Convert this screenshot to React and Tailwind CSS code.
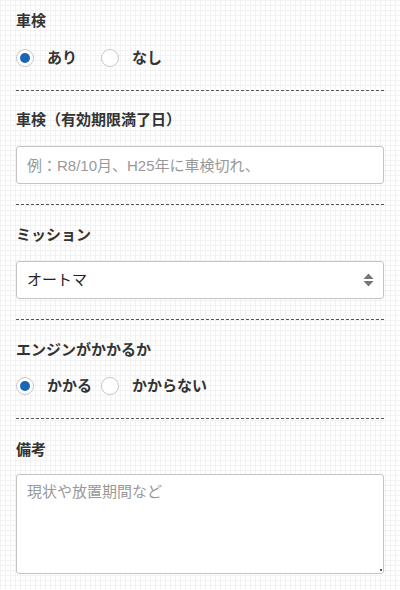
import React, { useState } from 'react';

const font = { fontFamily: '"Liberation Sans", "Noto Sans CJK JP", sans-serif' };

function Dashed() {
  return <div className="h-px w-full bg-[linear-gradient(to_right,#555_3px,transparent_3px)] bg-[length:5px_1px] bg-repeat-x" />;
}

function Radio({ checked, label, onClick, wide }) {
  return (
    <label onClick={onClick} className={`flex items-center h-[22px] cursor-pointer ${wide ? 'w-[85px]' : ''}`}>
      <span className="w-[18px] h-[18px] rounded-full border border-[#c8c8c8] bg-white flex items-center justify-center shrink-0">
        {checked && <span className="w-[10px] h-[10px] rounded-full bg-[#1766b8]" />}
      </span>
      <span className="ml-[13px] text-[15px] font-bold text-[#333] leading-[22px]">{label}</span>
    </label>
  );
}

function Label({ children }) {
  return <div className="text-[15px] font-bold text-[#333] leading-[22px]">{children}</div>;
}

export default function App() {
  const [shaken, setShaken] = useState('あり');
  const [engine, setEngine] = useState('かかる');

  return (
    <div
      style={font}
      className="min-h-[590px] w-[400px] px-4 bg-white bg-[linear-gradient(#f2f2f2_1px,transparent_1px),linear-gradient(90deg,#f2f2f2_1px,transparent_1px)] bg-[length:5px_5px]"
    >
      {/* 車検 */}
      <div className="pt-[10px] pb-[21px]">
        <Label>車検</Label>
        <div className="flex mt-[15px]">
          <Radio wide checked={shaken === 'あり'} label="あり" onClick={() => setShaken('あり')} />
          <Radio checked={shaken === 'なし'} label="なし" onClick={() => setShaken('なし')} />
        </div>
      </div>
      <Dashed />

      {/* 有効期限 */}
      <div className="pt-[18px] pb-[20px]">
        <Label>車検（有効期限満了日）</Label>
        <input
          type="text"
          placeholder="例：R8/10月、H25年に車検切れ、"
          className="mt-[15px] block w-full h-[38px] px-[10px] bg-white border border-[#c4c4c4] rounded-[3px] text-[15px] text-[#333] placeholder:text-[#999] outline-none"
        />
      </div>
      <Dashed />

      {/* ミッション */}
      <div className="pt-[19px] pb-[20px]">
        <Label>ミッション</Label>
        <div className="relative mt-[15px]">
          <select className="appearance-none block w-full h-[38px] pl-[10px] pr-8 bg-white border border-[#c4c4c4] rounded-[3px] text-[15px] text-[#222] outline-none">
            <option>オートマ</option>
            <option>マニュアル</option>
          </select>
          <svg className="absolute right-[10px] top-1/2 -translate-y-1/2 pointer-events-none" width="11" height="16" viewBox="0 0 11 16">
            <path d="M0.5 7 L5.5 1.5 L10.5 7 Z" fill="#777" />
            <path d="M0.5 9 L5.5 14.5 L10.5 9 Z" fill="#777" />
          </svg>
        </div>
      </div>
      <Dashed />

      {/* エンジン */}
      <div className="pt-[19px] pb-[21px]">
        <Label>エンジンがかかるか</Label>
        <div className="flex mt-[14px]">
          <Radio wide checked={engine === 'かかる'} label="かかる" onClick={() => setEngine('かかる')} />
          <Radio checked={engine === 'かからない'} label="かからない" onClick={() => setEngine('かからない')} />
        </div>
      </div>
      <Dashed />

      {/* 備考 */}
      <div className="pt-[20px] pb-4">
        <Label>備考</Label>
        <div className="relative mt-[13px]">
          <textarea
            placeholder="現状や放置期間など"
            className="block w-full h-[100px] px-[10px] py-[6px] resize-none bg-white border border-[#c4c4c4] rounded-[3px] text-[15px] text-[#333] placeholder:text-[#999] outline-none"
          />
          <span className="absolute right-[2px] bottom-[3px] w-[2px] h-[2px] bg-[#555]" />
        </div>
      </div>
    </div>
  );
}
